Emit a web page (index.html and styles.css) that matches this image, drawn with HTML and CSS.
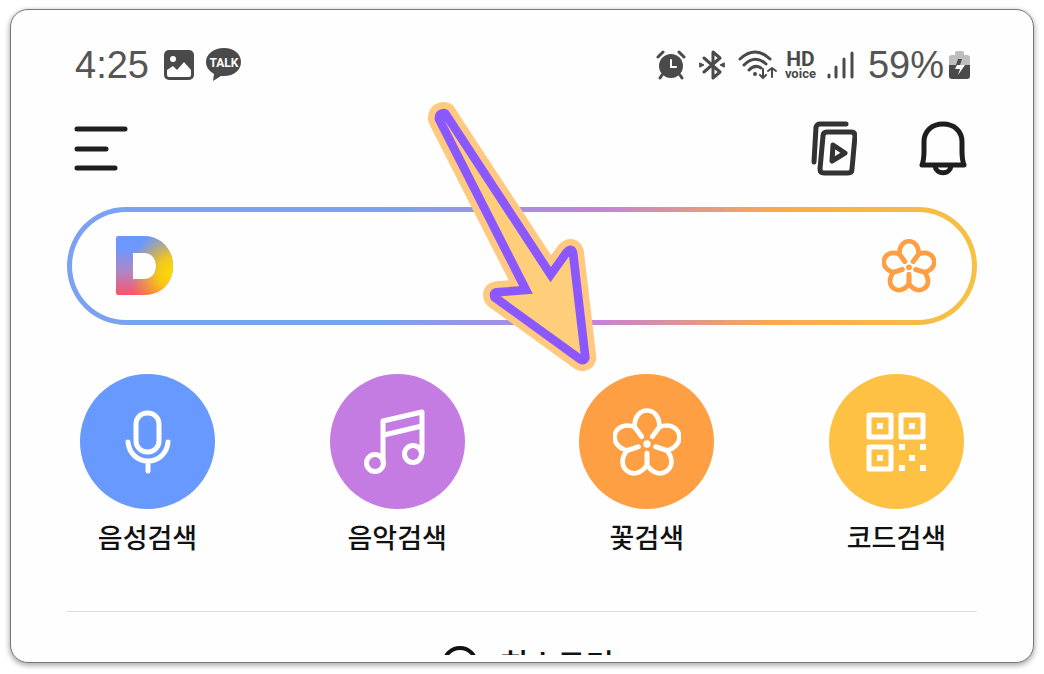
FILE: index.html
```html
<!DOCTYPE html>
<html lang="ko">
<head>
<meta charset="UTF-8" />
<meta name="viewport" content="width=device-width, initial-scale=1" />
<title>꽃검색</title>
<link rel="stylesheet" href="styles.css">
</head>

<body>
  <!-- Shared flower shape -->
  <svg class="defs" aria-hidden="true">
    <defs>
      <path id="petal" d="M16 -22L37 -51C40 -117 -40 -117 -37 -51L-16 -22" />
      <g id="flower">
        <use href="#petal" />
        <use href="#petal" transform="rotate(72)" />
        <use href="#petal" transform="rotate(144)" />
        <use href="#petal" transform="rotate(216)" />
        <use href="#petal" transform="rotate(288)" />
        <circle class="flower-dot" r="11" />
      </g>
    </defs>
  </svg>

  <div class="card">
    <div class="screen">
      <div class="status-bar">
        <div class="status-left">
          <span class="clock">4:25</span>
          <svg class="icon-photo" width="30" height="30" viewBox="0 0 30 30">
            <rect width="30" height="30" rx="5" fill="#4a4a4a" />
            <circle cx="9" cy="9" r="3" fill="#fff" />
            <path d="M3 20L9 16L13 20L20 12L27 20V25Q27 27 25 27H5Q3 27 3 25Z" fill="#fff" />
          </svg>
          <svg class="icon-talk" width="36" height="34" viewBox="0 0 36 34">
            <path d="M18 0C28 0 35 6 35 14C35 22 28 28 18 28H15L7 33L8 26C3 23 0 19 0 14C0 6 8 0 18 0Z" fill="#4a4a4a" />
            <text x="18" y="19" text-anchor="middle" class="talk-text">TALK</text>
          </svg>
        </div>
        <div class="status-right">
          <svg width="30" height="30" viewBox="0 0 30 30" fill="none" stroke="#4a4a4a" stroke-width="3" stroke-linecap="round">
            <circle cx="15" cy="16" r="12" fill="#4a4a4a" stroke="none" />
            <path d="M2 7L7 2M28 7L23 2M6 25L4 28M24 25L26 28" />
            <path d="M15 10V17H20" stroke="#fff" stroke-width="2" />
          </svg>
          <svg class="icon-bt" width="26" height="30" viewBox="0 0 26 30" fill="none" stroke="#4a4a4a" stroke-width="3" stroke-linecap="round" stroke-linejoin="round">
            <path d="M5 8L21 22L14 28V2L21 8L5 22" />
            <path d="M1 13L5 15L1 17ZM25 13L21 15L25 17Z" fill="#4a4a4a" stroke-width="1" />
          </svg>
          <svg class="icon-wifi" width="40" height="30" viewBox="0 0 40 30" fill="none" stroke="#4a4a4a" stroke-width="3" stroke-linecap="round">
            <path d="M2 9Q17 -5 32 9M6 15Q17 4 28 14M11 20Q17 14 23 18" />
            <circle cx="17" cy="24" r="2" fill="#4a4a4a" stroke="none" />
            <path d="M25 19V28M22 25L25 28L28 25M34 27V18M30 21L34 18L38 21" stroke-width="2" />
          </svg>
          <span class="hd"><b>HD</b><small>voice</small></span>
          <svg class="icon-signal" width="27" height="28" viewBox="0 0 27 28" stroke="#4a4a4a" stroke-width="3" stroke-linecap="round">
            <path d="M2 24V26M9 16V26M17 8V26M25 2V26" />
          </svg>
          <span class="percent">59%</span>
          <svg class="icon-battery" width="21" height="30" viewBox="0 0 21 30">
            <path d="M6 5V3Q6 1 8 1H13Q15 1 15 3V5H18Q21 5 21 8V16H0V8Q0 5 3 5Z" fill="#bdbdbd" />
            <path d="M0 15H21V26Q21 29 18 29H3Q0 29 0 26Z" fill="#4a4a4a" />
            <path d="M9 9H13L11 15H7Z" fill="#4a4a4a" />
            <path d="M11 15H16L9 25L11 19H6L8 15Z" fill="#fff" />
          </svg>
        </div>
      </div>

      <header class="top-bar">
        <button class="icon-btn" aria-label="메뉴">
          <svg width="54" height="46" viewBox="0 0 54 46" stroke="#1e1e1e" stroke-width="5" stroke-linecap="round">
            <path d="M3 3H51M3 23H32M3 42H41" />
          </svg>
        </button>
        <div class="top-actions">
          <button class="icon-btn" aria-label="재생 목록">
            <svg width="46" height="55" viewBox="0 0 46 55" fill="none" stroke="#333" stroke-width="5" stroke-linecap="round" stroke-linejoin="round">
              <path d="M3 41L5 6Q6 3 9 3H35" />
              <path d="M16 11H40Q44 11 44 15L41 48Q41 52 37 52H13Q9 52 9 48L12 15Q12 11 16 11Z" />
              <path d="M22 24L34 32L21 40Z" />
            </svg>
          </button>
          <button class="icon-btn" aria-label="알림">
            <svg width="48" height="55" viewBox="0 0 48 55" fill="none" stroke="#1e1e1e" stroke-width="5" stroke-linecap="round" stroke-linejoin="round">
              <path d="M3 44C5 39 5 35 5 30V21C5 10 13 3 24 3S43 10 43 21V30C43 35 43 39 45 44Z" />
              <path d="M16 45C17 54 31 54 32 45" />
            </svg>
          </button>
        </div>
      </header>

      <div class="search">
        <svg width="57" height="60" viewBox="0 0 57 60" fill-rule="evenodd" aria-hidden="true">
          <defs>
            <linearGradient id="logoBase" x1="0" y1="0" x2="0" y2="1">
              <stop offset="0.2" stop-color="#6b98ff" />
              <stop offset="0.6" stop-color="#ad86c8" />
              <stop offset="1" stop-color="#ff5268" />
            </linearGradient>
            <radialGradient id="logoGlow" gradientUnits="userSpaceOnUse" cx="59" cy="38" r="46">
              <stop offset="0" stop-color="#ffe100" />
              <stop offset="0.4" stop-color="#ffd000" stop-opacity="0.85" />
              <stop offset="1" stop-color="#ffb000" stop-opacity="0" />
            </radialGradient>
            <path id="d" d="M2 0H28C45 0 57 13 57 30S45 59 28 59H2Q0 59 0 57V2Q0 0 2 0ZM17 17V43H28C36 43 40 37 40 30S36 17 28 17Z" />
          </defs>
          <use href="#d" fill="url(#logoBase)" />
          <use href="#d" fill="url(#logoGlow)" />
        </svg>
        <input class="search-input" type="text" aria-label="검색어 입력">
        <button class="icon-btn" aria-label="꽃검색">
          <svg class="flower flower-small" width="54" height="54" viewBox="-104 -109 208 208"><use href="#flower" /></svg>
        </button>
      </div>

      <nav class="shortcuts">
        <a class="shortcut" href="#">
          <span class="circle blue">
            <svg width="46" height="64" viewBox="0 0 46 64" fill="none" stroke="#fff" stroke-width="5" stroke-linecap="round">
              <rect x="11" y="3" width="23" height="39" rx="11" />
              <path d="M3 32C4 43 12 51 23 51S42 43 43 32M23 51V61" />
            </svg>
          </span>
          <span class="label">음성검색</span>
        </a>
        <a class="shortcut" href="#">
          <span class="circle purple">
            <svg class="icon-music" width="61" height="66" viewBox="0 0 61 66" fill="none" stroke="#fff" stroke-width="5" stroke-linejoin="round">
              <circle cx="11" cy="54" r="8.5" />
              <circle cx="49" cy="45" r="8.5" />
              <path d="M19 54V12L58 3V45M20 26L58 17" />
            </svg>
          </span>
          <span class="label">음악검색</span>
        </a>
        <a class="shortcut" href="#">
          <span class="circle orange">
            <svg class="flower" width="68" height="68" viewBox="-102 -108 204 204"><use href="#flower" /></svg>
          </span>
          <span class="label">꽃검색</span>
        </a>
        <a class="shortcut" href="#">
          <span class="circle yellow">
            <svg width="60" height="60" viewBox="0 0 60 60" fill="#fff">
              <path fill="none" stroke="#fff" stroke-width="5" stroke-linejoin="round" d="M3 3H25V25H3ZM35 3H57V25H35ZM3 35H25V57H3Z" />
              <path d="M11 11H17V17H11ZM43 11H49V17H43ZM11 43H17V49H11ZM33 32H39V38H33ZM54 32H60V38H54ZM43 43H49V49H43ZM33 53H39V59H33ZM54 53H60V59H54Z" />
            </svg>
          </span>
          <span class="label">코드검색</span>
        </a>
      </nav>

      <a class="history" href="#">
        <svg width="36" height="36" viewBox="0 0 36 36" fill="none" stroke="#111" stroke-width="4">
          <circle cx="18" cy="18" r="16" />
          <path d="M18 9V19L24 23" />
        </svg>
        <span>히스토리</span>
      </a>
    </div>

    <!-- Arrow over the flower search button -->
    <svg class="arrow" width="171" height="270" viewBox="48 36 513 810" stroke-linejoin="round" aria-hidden="true">
      <path class="arrow-edge" d="M87 87Q86 73 96 70T108 74L422 554L470 487Q484 472 489 488L526 803Q523 814 511 808L254 622Q248 609 260 607L348 600Z" />
      <path class="arrow-line" stroke-linejoin="miter" d="M87 87Q86 73 96 70T108 74L422 554L470 487Q484 472 489 488L526 803Q523 814 511 808L254 622Q248 609 260 607L348 600Z" />
    </svg>
  </div>
</body>
</html>
```
FILE: styles.css
```css
* {
  box-sizing: border-box;
}
body {
  margin: 0;
  height: 100vh;
  display: flex;
  padding: 9px 10px 11px;
  background: #fff;
  font-family: "Noto Sans CJK KR", sans-serif;
  color: #111;
}
svg {
  display: block;
}
a {
  color: inherit;
  text-decoration: none;
}
.defs {
  position: absolute;
  width: 0;
  height: 0;
}
.card {
  position: relative;
  flex: 1;
  display: flex;
  padding: 33px 56px 7px;
  border: 1px solid #777;
  border-radius: 18px;
  background: #fefefe;
  box-shadow: 0 2px 5px 1px rgb(0 0 0 / 0.3);
  overflow: hidden;
}
.screen {
  flex: 1;
  min-width: 0;
  overflow: hidden;
}

/* Status bar */
.status-bar {
  display: flex;
  justify-content: space-between;
  height: 44px;
  padding: 0 7px 0 8px;
  font-family: Roboto, sans-serif;
  color: #4a4a4a;
}
.status-left,
.status-right {
  display: flex;
  align-items: center;
}
.clock,
.percent {
  font-family: "Liberation Sans", sans-serif;
  font-size: 38px;
  line-height: 44px;
  color: #555;
}
.icon-photo {
  margin-left: 15px;
}
.icon-talk {
  margin-left: 12px;
}
.talk-text {
  font-family: Roboto, sans-serif;
  font-size: 12px;
  font-weight: 700;
  fill: #fff;
}
.icon-bt,
.icon-wifi {
  margin-left: 13px;
}
.hd {
  display: flex;
  flex-direction: column;
  align-items: center;
  margin-left: 7px;
}
.hd b {
  font-size: 21px;
  line-height: 17px;
}
.hd small {
  font-size: 13px;
  font-weight: 700;
  line-height: 11px;
}
.icon-signal {
  margin-left: 11px;
}
.percent {
  margin-left: 14px;
}
.icon-battery {
  margin-left: 5px;
}

/* Top bar */
.top-bar {
  display: flex;
  justify-content: space-between;
  align-items: center;
  margin-top: 34px;
  padding: 0 10px 0 7px;
}
.top-actions {
  display: flex;
  gap: 62px;
}
.icon-btn {
  padding: 0;
  border: none;
  background: none;
  cursor: pointer;
}

/* Search */
.search {
  display: flex;
  align-items: center;
  height: 118px;
  margin-top: 31px;
  padding: 0 36px 0 44px;
  border: 5px solid transparent;
  border-radius: 59px;
  background:
    linear-gradient(#fefefe, #fefefe) padding-box,
    linear-gradient(90deg, #7aa2f0 35%, #c183d8 58%, #fba94c 78%, #f6c243) border-box;
}
.search-input {
  flex: 1;
  min-width: 0;
  height: 60px;
  margin: 0 20px;
  border: none;
  outline: none;
  background: none;
  font-size: 28px;
}
.flower {
  --flower-color: #fff;
  fill: none;
  stroke: var(--flower-color);
  stroke-width: 14;
  stroke-linecap: round;
  stroke-linejoin: round;
}
.flower-small {
  --flower-color: #ff9f45;
  stroke-width: 18;
}
.flower-dot {
  fill: var(--flower-color);
  stroke: none;
}

/* Shortcuts */
.shortcuts {
  display: flex;
  justify-content: space-between;
  margin-top: 49px;
  padding: 0 13px;
}
.shortcut {
  display: flex;
  flex-direction: column;
  align-items: center;
}
.circle {
  display: flex;
  align-items: center;
  justify-content: center;
  width: 135px;
  height: 135px;
  border-radius: 50%;
}
.blue { background: #6899ff; }
.purple { background: #c47ce2; }
.orange { background: #ff9f43; }
.yellow { background: #ffc143; }
.icon-music {
  margin-right: 5px;
}
.label {
  margin-top: 8px;
  font-size: 27px;
  font-weight: 500;
  line-height: 40px;
}

/* History */
.history {
  display: flex;
  justify-content: center;
  align-items: flex-start;
  gap: 22px;
  margin-top: 54px;
  padding: 34px 0 34px 12px;
  border-top: 1px solid #ddd;
  font-size: 31px;
  font-weight: 500;
  line-height: 34px;
}

/* Arrow */
.arrow {
  position: absolute;
  left: 415px;
  top: 92px;
}
.arrow-edge {
  fill: #ffc97f;
  stroke: #ffc97f;
  stroke-width: 66;
}
.arrow-line {
  fill: #ffce7a;
  stroke: #8b57ff;
  stroke-width: 26;
}
```
